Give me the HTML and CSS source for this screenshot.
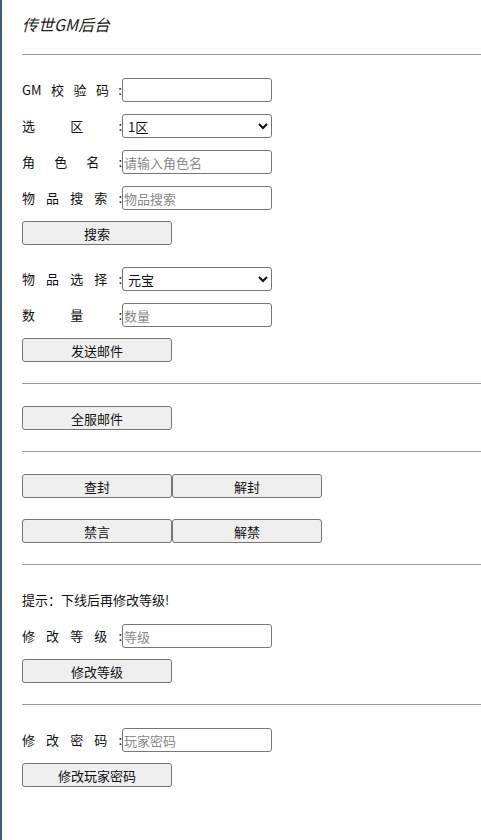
FILE: index.html
```html
<!DOCTYPE html>
<html lang="zh-CN">
<head>
  <meta charset="UTF-8">
  <title>传世GM后台</title>
  <link rel="stylesheet" href="styles.css">
</head>
<body>
  <div class="page">
    <div class="title">传世GM后台</div>
    <hr>

    <!-- 邮件 -->
    <div class="section">
      <div class="form">
        <div class="field">
          <label>GM校验码:</label>
          <input type="password">
        </div>
        <div class="field">
          <label>选区:</label>
          <select>
            <option>1区</option>
            <option>2区</option>
          </select>
        </div>
        <div class="field">
          <label>角色名:</label>
          <input type="text" placeholder="请输入角色名">
        </div>
        <div class="field">
          <label>物品搜索:</label>
          <input type="text" placeholder="物品搜索">
        </div>
        <button class="btn">搜索</button>
      </div>

      <div class="form">
        <div class="field">
          <label>物品选择:</label>
          <select>
            <option>元宝</option>
          </select>
        </div>
        <div class="field">
          <label>数量:</label>
          <input type="text" placeholder="数量">
        </div>
        <button class="btn">发送邮件</button>
      </div>
    </div>
    <hr>

    <div class="section actions">
      <button class="btn">全服邮件</button>
    </div>
    <hr>

    <!-- 封号 / 禁言 -->
    <div class="section actions">
      <div class="btn-row">
        <button class="btn">查封</button>
        <button class="btn">解封</button>
      </div>
      <div class="btn-row">
        <button class="btn">禁言</button>
        <button class="btn">解禁</button>
      </div>
    </div>
    <hr>

    <div class="section">
      <div class="form">
        <div class="tip">提示：下线后再修改等级!</div>
        <div class="field">
          <label>修改等级:</label>
          <input type="text" placeholder="等级">
        </div>
        <button class="btn">修改等级</button>
      </div>
    </div>
    <hr>

    <div class="section">
      <div class="form">
        <div class="field">
          <label>修改密码:</label>
          <input type="text" placeholder="玩家密码">
        </div>
        <button class="btn">修改玩家密码</button>
      </div>
    </div>
  </div>
</body>
</html>
```

FILE: styles.css
```css
* {
  margin: 0;
  padding: 0;
  box-sizing: border-box;
}

body {
  font-family: "Noto Sans CJK SC", "Liberation Sans", sans-serif;
  font-size: 13px;
  color: #111;
  background: #fff;
}

.page {
  min-height: 100vh;
  border-left: 2px solid #3d5a78;
  padding-left: 20px;
}

.title {
  font-size: 16px;
  font-style: italic;
  line-height: 24px;
  padding-top: 12px;
  margin-bottom: 18px;
  color: #222;
}

hr {
  border: none;
  border-top: 1px solid #9a9a9a;
}

.section {
  display: flex;
  flex-direction: column;
  gap: 22px;
  padding: 23px 0 21px;
}

.section.actions {
  gap: 21px;
  padding-top: 22px;
}

.form {
  display: flex;
  flex-direction: column;
  gap: 12px;
}

.field {
  display: flex;
  align-items: center;
  height: 24px;
}

.field label {
  width: 100px;
  text-align: justify;
  text-align-last: justify;
  line-height: 24px;
}

.field input,
.field select {
  width: 150px;
  height: 24px;
  font-family: inherit;
  font-size: 13px;
  border: 1px solid #767676;
  border-radius: 3px;
  padding: 0 1px;
  color: #111;
  background: #fff;
}

.field input::placeholder {
  color: #8a8a8a;
}

.btn {
  width: 150px;
  height: 24px;
  font-family: inherit;
  font-size: 13px;
  color: #111;
  background: #efefef;
  border: 1px solid #767676;
  border-radius: 3px;
}

.form .btn {
  margin-top: -1px;
}

.btn-row {
  display: flex;
}

.tip {
  line-height: 24px;
}
```
